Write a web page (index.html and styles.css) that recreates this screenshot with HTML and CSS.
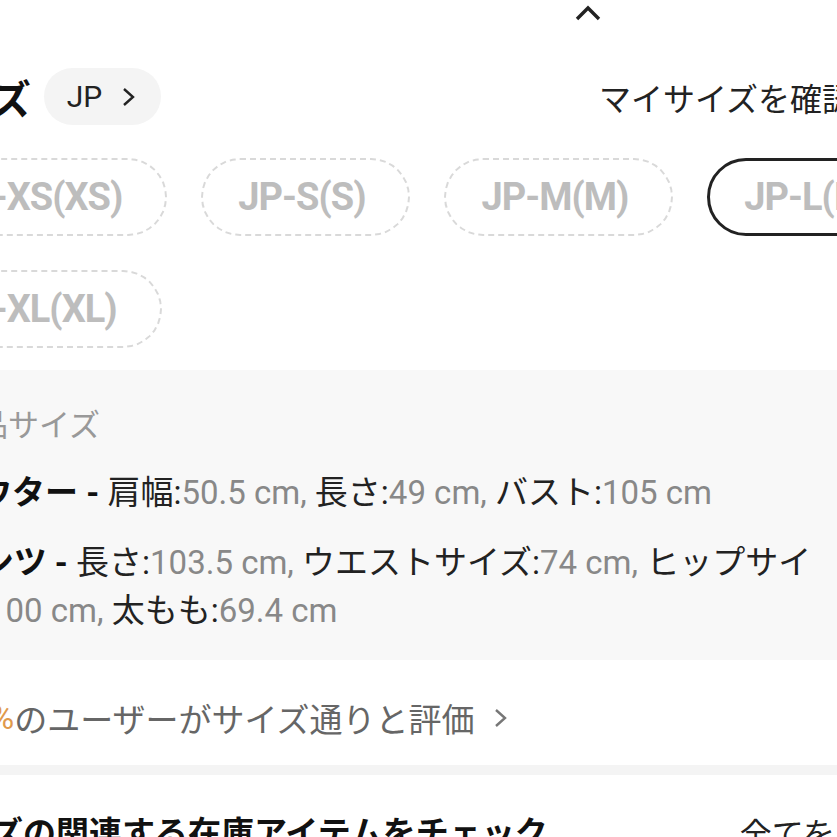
FILE: index.html
```html
<!DOCTYPE html>
<html lang="ja">
<head>
	<meta charset="utf-8">
	<title>サイズ</title>
	<link rel="stylesheet" href="styles.css">
</head>
<body>
	<div class="sheet">
		<div class="handle">
			<svg class="handle-icon" width="26" height="16" viewBox="0 0 26 16"><polyline points="2,14 13,3 24,14" fill="none" stroke="#222" stroke-width="3.4"/></svg>
		</div>

		<div class="title-row">
			<h2 class="title">サイズ</h2>
			<span class="region-pill">JP
				<svg class="chev" width="15" height="22" viewBox="0 0 15 22"><polyline points="3,3 12,11 3,19" fill="none" stroke="#222" stroke-width="2.4"/></svg>
			</span>
			<span class="my-size">マイサイズを確認
				<svg class="chev" width="15" height="22" viewBox="0 0 15 22"><polyline points="3,3 12,11 3,19" fill="none" stroke="#222" stroke-width="2.4"/></svg>
			</span>
		</div>

		<div class="chips">
			<span class="chip">JP-XS(XS)</span>
			<span class="chip">JP-S(S)</span>
			<span class="chip">JP-M(M)</span>
			<span class="chip selected">JP-L(L)</span>
			<span class="chip">JP-XL(XL)</span>
		</div>

		<div class="measure">
			<div class="measure-label">商品サイズ</div>
			<p class="measure-line"><b>アウター - </b>肩幅:<span class="val">50.5 cm, </span>長さ:<span class="val">49 cm, </span>バスト:<span class="val">105 cm</span></p>
			<p class="measure-line"><b>パンツ - </b>長さ:<span class="val">103.5 cm, </span>ウエストサイズ:<span class="val">74 cm, </span>ヒップサイ<br>ズ:<span class="val">100 cm, </span>太もも:<span class="val">69.4 cm</span></p>
		</div>

		<div class="rating">
			<span class="pct">92%</span>のユーザーがサイズ通りと評価
			<svg class="chev" width="15" height="22" viewBox="0 0 15 22"><polyline points="3,3 12,11 3,19" fill="none" stroke="#777" stroke-width="2.4"/></svg>
		</div>

		<div class="band"></div>

		<div class="related-row">
			<h3 class="related-title">サイズの関連する在庫アイテムをチェック</h3>
			<span class="see-all">全てを見る</span>
		</div>
	</div>
</body>
</html>
```

FILE: styles.css
```css
html, body{
	margin: 0;
	padding: 0;
	background: #fff;
}
body{
	width: 837px;
	height: 837px;
	overflow: hidden;
	font-family: Roboto, "Noto Sans CJK JP", sans-serif;
	color: #222;
}
.sheet{
	margin-left: -88px;
	width: 990px;
}

.handle{
	height: 60px;
	padding-left: 663px;
	box-sizing: border-box;
	padding-top: 5px;
}
.handle-icon{
	display: block;
}

.title-row{
	display: flex;
	align-items: center;
	height: 57px;
	margin-top: 8px;
}
.title{
	margin: 0;
	font-size: 40px;
	font-weight: 700;
	color: #111;
}
.region-pill{
	display: flex;
	align-items: center;
	height: 57px;
	margin-left: 13px;
	padding: 0 25px 0 23px;
	border-radius: 29px;
	background: #f4f4f4;
	font-size: 30px;
}
.region-pill .chev{
	margin-left: 19px;
}
.my-size{
	display: flex;
	align-items: center;
	margin-left: auto;
	margin-right: 21px;
	font-size: 32px;
}
.my-size .chev{
	margin-left: 12px;
}

.chips{
	display: flex;
	flex-wrap: wrap;
	gap: 34px 34px;
	width: 1080px;
	margin-top: 33px;
}
.chip{
	display: flex;
	align-items: center;
	height: 78px;
	box-sizing: border-box;
	padding: 0 43px 0 35px;
	border: 2px dashed #d9d9d9;
	border-radius: 39px;
	font-size: 38px;
	font-weight: 700;
	color: #bdbdbd;
	letter-spacing: -1px;
}
.chip.selected{
	border: 3px solid #222;
	padding: 0 42px 0 34px;
}

.measure{
	margin-top: 22px;
	height: 290px;
	box-sizing: border-box;
	padding: 36px 0 0 34px;
	background: #f8f8f8;
}
.measure-label{
	font-size: 31px;
	color: #999;
	line-height: 40px;
}
.measure-line{
	margin: 23px 0 0;
	font-size: 33px;
	line-height: 48px;
	color: #222;
}
.measure-line + .measure-line{
	margin-top: 22px;
}
.measure-line b{
	color: #111;
}
.val{
	color: #888;
}

.rating{
	display: flex;
	align-items: center;
	height: 105px;
	box-sizing: border-box;
	padding: 10px 0 0 41px;
	font-size: 33px;
	color: #666;
}
.pct{
	color: #e0994c;
}
.rating .chev{
	margin-left: 18px;
}

.band{
	height: 10px;
	background: #f4f4f4;
}

.related-row{
	display: flex;
	align-items: flex-start;
	padding-top: 32px;
	padding-left: 13px;
}
.related-title{
	margin: 0;
	font-size: 33px;
	font-weight: 700;
	color: #111;
}
.see-all{
	margin-left: auto;
	margin-right: 3px;
	font-size: 32px;
	color: #222;
	padding-top: 2px;
}
```
